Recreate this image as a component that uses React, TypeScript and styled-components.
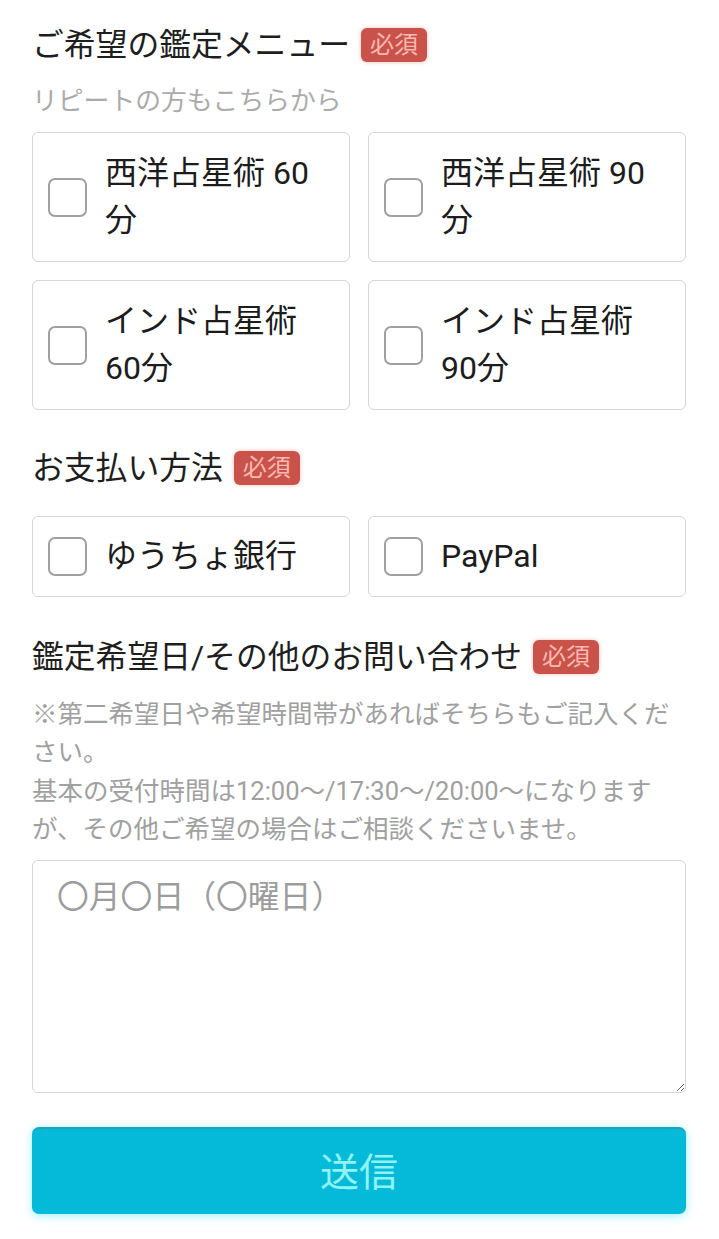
import * as React from "react";
import styled, { createGlobalStyle } from "styled-components";

const GlobalStyle = createGlobalStyle`
  html, body {
    margin: 0;
    padding: 0;
    background: #ffffff;
  }
  body {
    font-family: Roboto, "Noto Sans CJK JP", "Noto Sans", sans-serif;
    color: #1c1c1c;
  }
  * {
    box-sizing: border-box;
  }
`;

const Form = styled.form`
  width: 719px;
  padding: 22px 33px 24px 32px;
  display: flex;
  flex-direction: column;
`;

const Heading = styled.div<{ $top?: number }>`
  display: flex;
  align-items: center;
  margin-top: ${(p) => p.$top ?? 0}px;
  font-size: 31.8px;
  line-height: 46px;
  color: #1e1e1e;
`;

const Required = styled.span`
  display: inline-flex;
  align-items: center;
  justify-content: center;
  margin-left: 11px;
  height: 34px;
  padding: 0 9px;
  border-radius: 6px;
  background: #c9534a;
  color: #f7b9b1;
  font-size: 24px;
  line-height: 1;
  box-shadow: 0 0 4px rgba(230, 110, 100, 0.45);
`;

const Note = styled.p`
  margin: 14px 0 0;
  font-size: 25.8px;
  line-height: 38px;
  color: #ababab;
`;

const Help = styled.p`
  margin: 15px 0 0;
  font-size: 25.5px;
  line-height: 38.3px;
  color: #a0a0a0;
`;

const Options = styled.div<{ $top: number }>`
  display: grid;
  grid-template-columns: 1fr 1fr;
  gap: 18px;
  margin-top: ${(p) => p.$top}px;
`;

const Option = styled.label<{ $tall?: boolean }>`
  display: flex;
  align-items: center;
  min-height: ${(p) => (p.$tall ? 130 : 81)}px;
  padding: 0 24px 0 15px;
  border: 1.5px solid #d6d6d6;
  border-radius: 6px;
  background: #fff;
  cursor: pointer;
`;

const Box = styled.input.attrs({ type: "checkbox" })`
  appearance: none;
  flex: 0 0 auto;
  width: 39px;
  height: 39px;
  margin: 0 18px 0 0;
  border: 2px solid #a0a0a0;
  border-radius: 7px;
  background: #fff;
`;

const OptionText = styled.span`
  font-size: 32px;
  line-height: 47px;
  color: #1c1c1c;
`;

const TextArea = styled.textarea`
  margin-top: 12px;
  height: 233px;
  padding: 14px 24px;
  border: 1.5px solid #d6d6d6;
  border-radius: 6px;
  font-family: Roboto, "Noto Sans CJK JP", sans-serif;
  font-size: 31.8px;
  line-height: 44px;
  color: #1c1c1c;
  resize: vertical;
  outline: none;

  &::placeholder {
    color: #9c9c9c;
  }
`;

const Submit = styled.button`
  margin-top: 34px;
  height: 87px;
  padding: 0 0 6px;
  border: none;
  border-top: 2px solid #1fa2bf;
  border-radius: 7px;
  background: #05b9d8;
  color: #8ef3f3;
  font-family: Roboto, "Noto Sans CJK JP", sans-serif;
  font-size: 39px;
  box-shadow: 0 2px 10px rgba(40, 230, 255, 0.45);
  cursor: pointer;
`;

const menus = ["西洋占星術 60分", "西洋占星術 90分", "インド占星術 60分", "インド占星術 90分"];
const payments = ["ゆうちょ銀行", "PayPal"];

export default function App() {
  return (
    <>
      <GlobalStyle />
      <Form onSubmit={(e) => e.preventDefault()}>
        <Heading>
          ご希望の鑑定メニュー<Required>必須</Required>
        </Heading>
        <Note>リピートの方もこちらから</Note>
        <Options $top={12}>
          {menus.map((m) => (
            <Option key={m} $tall>
              <Box />
              <OptionText>{m}</OptionText>
            </Option>
          ))}
        </Options>

        <Heading $top={35}>
          お支払い方法<Required>必須</Required>
        </Heading>
        <Options $top={25}>
          {payments.map((m) => (
            <Option key={m}>
              <Box />
              <OptionText>{m}</OptionText>
            </Option>
          ))}
        </Options>

        <Heading $top={37}>
          鑑定希望日/その他のお問い合わせ<Required>必須</Required>
        </Heading>
        <Help>
          ※第二希望日や希望時間帯があればそちらもご記入ください。
          <br />
          基本の受付時間は12:00〜/17:30〜/20:00〜になりますが、その他ご希望の場合はご相談くださいませ。
        </Help>
        <TextArea placeholder="〇月〇日（〇曜日）" />
        <Submit type="submit">送信</Submit>
      </Form>
    </>
  );
}
